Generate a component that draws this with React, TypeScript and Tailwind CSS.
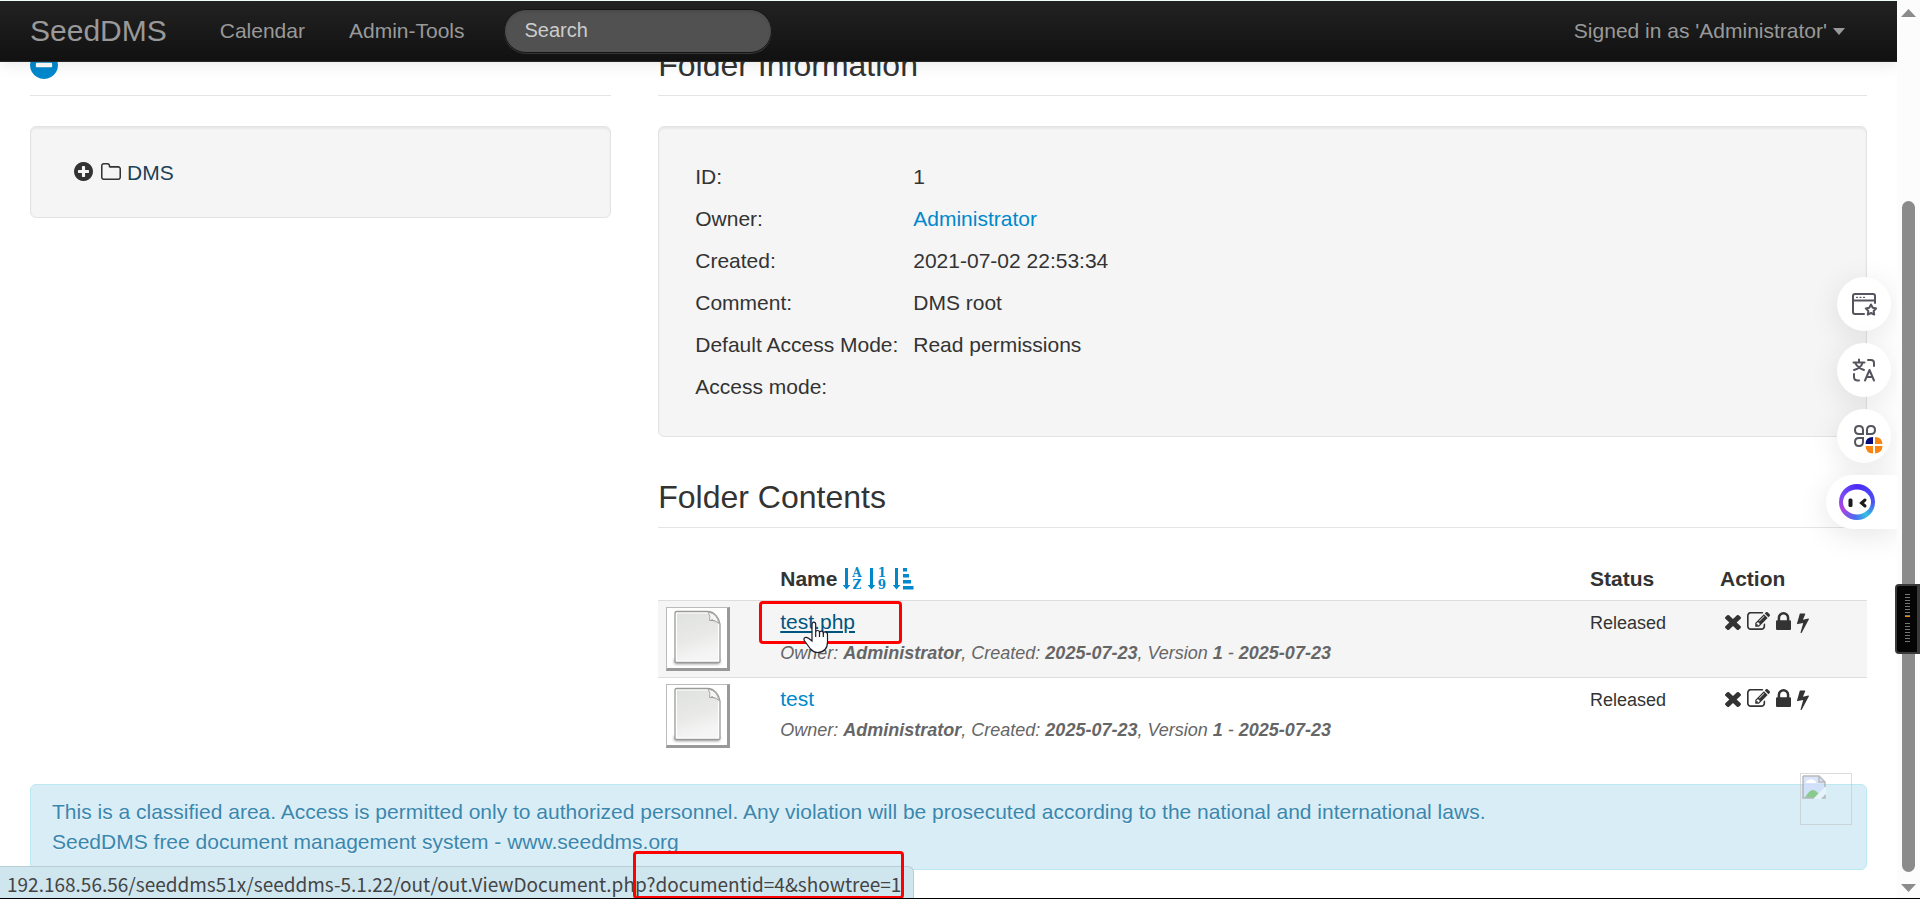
import type { ReactNode } from "react";

const info = [
  { label: "ID:", value: "1" },
  { label: "Owner:", value: "Administrator", link: true },
  { label: "Created:", value: "2021-07-02 22:53:34" },
  { label: "Comment:", value: "DMS root" },
  { label: "Default Access Mode:", value: "Read permissions" },
  { label: "Access mode:", value: "" },
];

const documents = [
  { name: "test.php", owner: "Administrator", date: "2025-07-23", version: "1", hovered: true },
  { name: "test", owner: "Administrator", date: "2025-07-23", version: "1", hovered: false },
];

function Glyph({ d, box, className }: { d: string; box: string; className: string }) {
  return (
    <svg viewBox={box} preserveAspectRatio="none" fill="currentColor" className={className} aria-hidden="true">
      <path d={d} />
    </svg>
  );
}

const CIRCLE =
  "m320-64q0 209-103 385.5t-279.5 279.5-385.5 103-385.5-103-279.5-279.5-103-385.5 103-385.5 279.5-279.5 385.5-103 385.5 103 279.5 279.5 103 385.5z";
const PLUS_CIRCLE =
  "M1344 960v-128q0-26-19-45t-45-19h-256v-256q0-26-19-45t-45-19h-128q-26 0-45 19t-19 45v256h-256q-26 0-45 19t-19 45v128q0 26 19 45t45 19h256v256q0 26 19 45t45 19h128q26 0 45-19t19-45v-256h256q26 0 45-19t19-45z" +
  CIRCLE;
const MINUS_CIRCLE =
  "M1344 960v-128q0-26-19-45t-45-19h-768q-26 0-45 19t-19 45v128q0 26 19 45t45 19h768q26 0 45-19t19-45z" + CIRCLE;
const FOLDER =
  "M1600 1312v-704q0-40-28-68t-68-28h-704q-40 0-68-28t-28-68v-64q0-40-28-68t-68-28h-320q-40 0-68 28t-28 68v960q0 40 28 68t68 28h1216q40 0 68-28t28-68zm128-704v704q0 92-66 158t-158 66h-1216q-92 0-158-66t-66-158v-960q0-92 66-158t158-66h320q92 0 158 66t66 158v32h672q92 0 158 66t66 158z";
const REMOVE =
  "M1490 1322q0 40-28 68l-136 136q-28 28-68 28t-68-28l-294-294-294 294q-28 28-68 28t-68-28l-136-136q-28-28-28-68t28-68l294-294-294-294q-28-28-28-68t28-68l136-136q28-28 68-28t68 28l294 294 294-294q28-28 68-28t68 28l136 136q28 28 28 68t-28 68l-294 294 294 294q28 28 28 68z";
const EDIT =
  "M888 1184l116-116-152-152-116 116v56h96v96h56zm440-720q-16-16-33 1l-350 350q-17 17-1 33t33-1l350-350q17-17 1-33zm80 594v190q0 119-84.5 203.5t-203.5 84.5h-832q-119 0-203.5-84.5t-84.5-203.5v-832q0-119 84.5-203.5t203.5-84.5h832q63 0 117 25 15 7 18 23 3 17-9 29l-49 49q-14 14-32 8-23-6-45-6h-832q-66 0-113 47t-47 113v832q0 66 47 113t113 47h832q66 0 113-47t47-113v-126q0-13 9-22l64-64q15-15 35-7t20 29zm-96-738l288 288-672 672h-288v-288zm444 132l-92 92-288-288 92-92q28-28 68-28t68 28l152 152q28 28 28 68t-28 68z";
const LOCK =
  "M640 768h512v-192q0-106-75-181t-181-75-181 75-75 181v192zm832 96v576q0 40-28 68t-68 28h-960q-40 0-68-28t-28-68v-576q0-40 28-68t68-28h32v-192q0-184 132-316t316-132 316 132 132 316v192h32q40 0 68 28t28 68z";
const BOLT =
  "M1333 566q18 20 7 44l-540 1157q-13 25-42 25-4 0-14-2-17-5-25.5-19t-4.5-30l197-808-406 101q-4 1-12 1-18 0-31-11-18-15-13-39l201-825q4-14 16-23t28-9h328q19 0 32 12.5t13 29.5q0 8-5 18l-171 463 396-98q8-2 12-2 19 0 34 15z";

function SortIcon({ kind }: { kind: "alpha" | "numeric" | "amount" }) {
  return (
    <svg viewBox="0 -4 21 30" className="h-[30px] w-[21px] overflow-visible" fill="currentColor" aria-hidden="true">
      <path d="M2 0h3v17h2.300L3.500 21.500 -.3 17H2z" />
      {kind === "amount" ? (
        <path d="M10 0h4v3.500h-4zM10 6h6v3.500h-6zM10 12h8v3.500h-8zM10 18h10.500v3.500H10z" />
      ) : (
        <g fontFamily="'DejaVu Serif', serif" fontSize="12">
          <text x="14" y="9" textAnchor="middle">{kind === "alpha" ? "A" : "1"}</text>
          <text x="14" y="21" textAnchor="middle">{kind === "alpha" ? "Z" : "9"}</text>
        </g>
      )}
    </svg>
  );
}

function DocumentIcon() {
  return (
    <div className="flex h-16 w-16 items-center justify-center border border-r-3 border-b-3 border-[#bbb] border-r-[#999] border-b-[#999] bg-white">
      <svg viewBox="0 0 60 60" className="h-[60px] w-[60px]" aria-hidden="true">
        <defs>
          <linearGradient id="paper" x1="0" y1="0" x2="0.3" y2="1">
            <stop offset="0" stopColor="#e0e2df" />
            <stop offset="0.600" stopColor="#e9eae8" />
            <stop offset="1" stopColor="#f5f5f5" />
          </linearGradient>
          <filter id="soft" x="-20%" y="-100%" width="140%" height="300%">
            <feGaussianBlur stdDeviation="1.500" />
          </filter>
        </defs>
        <rect x="7" y="51" width="46" height="5" rx="2" fill="#666" opacity="0.700" filter="url(#soft)" />
        <path d="M9.500 3.500h31q5 0 8.500 4t4 8.500V53q0 1.500-1.500 1.500h-42Q8 54.500 8 53V5q0-1.500 1.500-1.500z" fill="#fff" stroke="#999b97" strokeWidth="1.300" />
        <path d="M10 5.500h30q9 2 11 10.500V52.500H10z" fill="url(#paper)" />
        <path d="M41 4q3 4 1.500 8.500 6-1 9 3Q51 6 41 4z" fill="#f6f6f6" stroke="#a9aaa7" />
        <path d="M43 13q4-1 7.500 2.500L45 11z" fill="#9a9c98" />
      </svg>
    </div>
  );
}

function Pointer() {
  return (
    <svg viewBox="0 0 26 33" className="absolute top-3.5 left-[23px] h-[33px] w-[26px]" aria-hidden="true">
      <path
        d="M9 20V3.500q0-2.300 1.800-2.300t1.900 2.300V11q.3-1.500 1.900-1.500 1.700 0 1.900 1.800.4-1.200 1.900-1.200t1.900 1.800q.4-1 1.800-1 2.300 0 2.400 2.600V21q0 5-2.500 7.500-3 3-7.500 3-4 0-7-3.500L2 20.500q-1.800-2.300-.5-3.600 1.500-1.200 4 .4z"
        fill="#fff"
        stroke="#1b1b2b"
        strokeWidth="1.200"
      />
      <path d="M12.700 11v5M16.500 11v5M20.300 12v4" stroke="#1b1b2b" strokeWidth="1.200" />
    </svg>
  );
}

function Legend({ children }: { children: ReactNode }) {
  return (
    <h3 className="mb-[30px] flex h-[61px] items-center border-b border-[#e5e5e5] text-[32px] leading-[60px]">
      {children}
    </h3>
  );
}

function Navbar() {
  return (
    <nav className="absolute inset-x-0 top-0 z-10 flex h-[62px] items-center border-t border-b border-t-[#eefcfc] border-b-[#252525] bg-linear-to-b from-[#222] to-[#111] px-[30px] text-[21px] leading-[30px] text-[#999] shadow-[0_2px_15px_rgba(0,0,0,0.1)]">
      <a href="#" className="mr-[53px] text-[30px]">SeedDMS</a>
      <a href="#" className="mr-11">Calendar</a>
      <a href="#">Admin-Tools</a>
      <input
        type="search"
        aria-label="Search"
        placeholder="Search"
        className="ml-[39px] h-11 w-[268px] rounded-full border border-[#151515] bg-[#515151] px-5 pb-0.5 text-[20px] text-white shadow-[inset_0_2px_3px_rgba(0,0,0,0.1),0_1px_0_rgba(255,255,255,0.15)] placeholder:text-[#ccc]"
      />
      <button type="button" className="mr-[22px] ml-auto flex items-center gap-1.5">
        Signed in as 'Administrator'
        <svg viewBox="0 0 12 7" className="h-[7px] w-3" fill="currentColor" aria-hidden="true">
          <path d="M0 0h12L6 7z" />
        </svg>
      </button>
    </nav>
  );
}

function FolderInformation() {
  return (
    <section>
      <Legend>Folder Information</Legend>
      <div className="mb-[30px] rounded-md border border-[#e3e3e3] bg-[#f5f5f5] px-[30px] pt-[29px] pb-7 shadow-[inset_0_2px_2px_rgba(0,0,0,0.05)]">
        <table className="w-full">
          <tbody>
            {info.map((row) => (
              <tr key={row.label}>
                <th scope="row" className="w-[218px] p-1.5 text-left font-normal whitespace-nowrap">{row.label}</th>
                <td className="p-1.5">
                  {row.link ? <a href="#" className="text-[#0088cc]">{row.value}</a> : row.value}
                </td>
              </tr>
            ))}
          </tbody>
        </table>
      </div>
    </section>
  );
}

function FolderContents() {
  return (
    <section>
      <Legend>Folder Contents</Legend>
      <table className="w-full table-fixed">
        <thead>
          <tr className="text-left">
            <th className="w-[114px]" aria-label="Preview" />
            <th className="px-2 py-1.5">
              <div className="flex items-center">
                Name
                <span className="ml-1.5 flex gap-1 text-[#0088cc]">
                  <button type="button" aria-label="Sort by name"><SortIcon kind="alpha" /></button>
                  <button type="button" aria-label="Sort by sequence"><SortIcon kind="numeric" /></button>
                  <button type="button" aria-label="Sort by date"><SortIcon kind="amount" /></button>
                </span>
              </div>
            </th>
            <th className="w-[130px] px-2 py-1.5">Status</th>
            <th className="w-[155px] px-2 py-1.5">Action</th>
          </tr>
        </thead>
        <tbody>
          {documents.map((doc) => (
            <tr key={doc.name} className="border-t border-[#ddd] align-top odd:bg-[#f5f5f5]">
              <td className="px-2 py-1.5"><DocumentIcon /></td>
              <td className="px-2 py-1.5">
                <div className="relative">
                  <a
                    href="#"
                    className={doc.hovered ? "text-[#005580] underline decoration-2 underline-offset-2" : "text-[#0088cc]"}
                  >
                    {doc.name}
                  </a>
                  <p className="text-[18px] leading-8 text-[#666] italic">
                    Owner: <b>{doc.owner}</b>, Created: <b>{doc.date}</b>, Version <b>{doc.version}</b> - <b>{doc.date}</b>
                  </p>
                  {doc.hovered && (
                    <>
                      <div className="absolute -top-1.5 -left-[21px] h-[43px] w-[143px] rounded-sm border-3 border-[#fe0000]" />
                      <Pointer />
                    </>
                  )}
                </div>
              </td>
              <td className="px-2 py-1.5 text-[18px] leading-8">Released</td>
              <td className="px-2 py-1.5">
                <div className="flex gap-1.5 pt-[5px] pl-[5px]">
                  <button type="button" aria-label="Remove" className="flex h-[21px] items-center">
                    <Glyph d={REMOVE} box="302 366 1188 1188" className="h-[15px] w-4" />
                  </button>
                  <button type="button" aria-label="Edit" className="flex h-[21px]">
                    <Glyph d={EDIT} box="0 136 1784 1400" className="h-[18px] w-[23px]" />
                  </button>
                  <button type="button" aria-label="Lock" className="flex h-[21px]">
                    <Glyph d={LOCK} box="320 128 1152 1408" className="h-[18px] w-[15px]" />
                  </button>
                  <button type="button" aria-label="Expire" className="flex h-[21px]">
                    <Glyph d={BOLT} box="448 0 897 1792" className="h-[21px] w-3" />
                  </button>
                </div>
              </td>
            </tr>
          ))}
        </tbody>
      </table>
    </section>
  );
}

function BrokenImage() {
  return (
    <div className="absolute -top-3 right-3.5 h-[52px] w-[52px] border border-[#c0c0c0]/70 p-px opacity-80">
      <svg viewBox="0 0 24 24" className="h-6 w-6" aria-hidden="true">
        <path d="M1 1h16l6 6v16H1z" fill="#cfdffa" />
        <path d="M4 8q0-3 3-3 2-2 4 0 3 0 3 3z" fill="#fff" />
        <path d="M3 23q8-16 16 0z" fill="#77c274" />
        <path d="M24 11L11 24h7l6-6z" fill="#eaf5fa" />
        <path d="M1 1h16l6 6v5M1 1v22h11M17 1v6h6M23 20v3h-3" fill="none" stroke="#a9a9a9" strokeWidth="1.500" />
      </svg>
    </div>
  );
}

function SideTools() {
  const round =
    "mr-1.5 flex h-[54px] w-[54px] items-center justify-center rounded-full bg-white shadow-[0_6px_30px_rgba(0,0,0,0.1)]";
  return (
    <div className="absolute top-[277px] right-0 z-20 flex flex-col items-end gap-3">
      <button type="button" aria-label="Bookmark page" className={round}>
        <svg viewBox="0 0 26 24" className="h-6 w-[26px]" fill="none" stroke="#55555f" strokeWidth="2" strokeLinejoin="round" strokeLinecap="round">
          <path d="M13 22H4q-2 0-2-2V4q0-2 2-2h18q2 0 2 2v7M2 8.500h22" />
          <path d="M5.500 5.300h1M9 5.300h1M12.500 5.300h1" strokeWidth="1.300" />
          <path d="M20 12.500l1.700 3.300 3.500.6-2.500 2.600.5 3.600-3.200-1.600-3.200 1.600.5-3.600-2.500-2.600 3.500-.6z" />
        </svg>
      </button>
      <button type="button" aria-label="Translate" className={round}>
        <svg viewBox="0 0 24 24" className="h-6 w-6" fill="none" stroke="#55555f" strokeWidth="2" strokeLinecap="round" strokeLinejoin="round">
          <path d="M1.500 4.500h11M7 1.500v3M10.500 5Q9 10 2 12M3.500 5.500Q6 10 12 12M16 2h3q3 0 3 3v3M2 16v3q0 3.500 4 3.500h1M13 22.500L17.500 12 22 22.500M14.500 19h6" />
        </svg>
      </button>
      <button type="button" aria-label="Apps" className={round}>
        <svg viewBox="0 0 30 30" className="mt-1.5 ml-[7px] h-[30px] w-[30px]" fill="none" stroke="#55555f" strokeWidth="2">
          <path d="M10 10H6Q2 10 2 6t4-4 4 4zM14 10V6q0-4 4-4t4 4-4 4zM10 14v4q0 4-4 4t-4-4 4-4z" />
          <g stroke="none">
            <path d="M20 20h-7.500q0-7 7.500-7z" fill="#050a78" />
            <path d="M22 20v-7q7 0 7.500 7zM20 22v7.500q-7 0-7.500-7.500zM22 22h7.500q0 7-7.500 7.500z" fill="#f98512" />
          </g>
        </svg>
      </button>
      <button
        type="button"
        aria-label="Assistant"
        className="flex h-[54px] w-[71px] items-center rounded-l-full bg-white pl-[13px] shadow-[0_6px_30px_rgba(0,0,0,0.1)]"
      >
        <span className="flex h-9 w-9 items-center justify-center rounded-full bg-[conic-gradient(#4a2cf5,#4b50f5_25%,#33c0e0_40%,#4a6cf0_52%,#b040e0_68%,#7a4cf5_82%,#4a2cf5)]">
          <svg viewBox="0 0 36 36" className="h-9 w-9">
            <ellipse cx="18" cy="18" rx="14" ry="12.500" fill="#fff" />
            <rect x="9.500" y="14.500" width="4" height="8.500" rx="1.500" fill="#1b1b1b" />
            <path d="M26 16l-3.500 3 3.500 3" fill="none" stroke="#1b1b1b" strokeWidth="3" strokeLinecap="round" />
          </svg>
        </span>
      </button>
    </div>
  );
}

function Scrollbar() {
  return (
    <div className="flex w-[23px] shrink-0 flex-col items-center bg-[#fcfcfc] pt-[9px] pb-1.5 pr-px pl-px">
      <svg viewBox="0 0 15 8" className="h-2 w-[15px]" fill="#8b8b8b" aria-hidden="true">
        <path d="M7.500 0L15 8H0z" />
      </svg>
      <div className="mt-[184px] mb-3 w-[13px] flex-1 rounded-full bg-[#8b8b8b]" />
      <svg viewBox="0 0 15 8" className="h-2 w-[15px]" fill="#8b8b8b" aria-hidden="true">
        <path d="M0 0h15L7.500 8z" />
      </svg>
    </div>
  );
}

function SideHandle() {
  return (
    <div className="absolute top-[584px] right-0 z-30 flex h-[70px] w-[25px] flex-col items-center justify-center gap-1.5 rounded-l-sm border-2 border-r-3 border-[#3a3a3a] bg-[#050505]">
      <div className="h-[23px] w-[5px] border-b border-[#f08a00] bg-[repeating-linear-gradient(#777_0_1px,transparent_1px_3px)]" />
      <div className="h-[21px] w-[5px] bg-[repeating-linear-gradient(#777_0_1px,transparent_1px_3px)]" />
    </div>
  );
}

export default function App() {
  return (
    <div className="relative flex h-screen overflow-hidden border-b border-black bg-white font-['Liberation_Sans',Arial,sans-serif] text-[21px] leading-[30px] text-[#333]">
      <div className="relative min-w-0 flex-1 overflow-hidden">
        <Navbar />
        <main className="px-[30px] pt-[35px]">
          <div className="mb-[30px] flex items-start justify-between">
            <aside className="w-[31.65%]">
              <Legend>
                <a href="#" aria-label="Hide folder tree" className="text-[#0088cc]">
                  <Glyph d={MINUS_CIRCLE} box="128 128 1536 1536" className="h-7 w-7" />
                </a>
              </Legend>
              <div className="flex h-[92px] items-center gap-2 rounded-md border border-[#e3e3e3] bg-[#f5f5f5] pt-0.5 pl-[43px] shadow-[inset_0_2px_2px_rgba(0,0,0,0.05)]">
                <button type="button" aria-label="Expand DMS" className="mb-1">
                  <Glyph d={PLUS_CIRCLE} box="128 128 1536 1536" className="h-[19px] w-[19px]" />
                </button>
                <a href="#" className="flex items-center gap-1.5 text-[#1c4257]">
                  <Glyph d={FOLDER} box="64 128 1664 1408" className="mb-1 h-[17px] w-5 text-[#333]" />
                  DMS
                </a>
              </div>
            </aside>
            <div className="w-[65.8%]">
              <FolderInformation />
              <FolderContents />
            </div>
          </div>
          <div className="relative rounded-md border border-[#bce8f1] bg-[#d9edf7] py-3 pr-[53px] pl-[21px] text-[#3a87ad] text-shadow-[0_1px_0_rgba(255,255,255,0.5)]">
            <p>
              This is a classified area. Access is permitted only to authorized personnel. Any violation will be
              prosecuted according to the national and international laws.
            </p>
            <p>SeedDMS free document management system - www.seeddms.org</p>
            <BrokenImage />
          </div>
        </main>
        <SideTools />
      </div>
      <Scrollbar />
      <SideHandle />

      {/* link target shown while hovering */}
      <div className="absolute -bottom-px left-0 z-20 h-[33px] rounded-tr-md border-t border-r border-[#b9cdd6] bg-[#cfe6ef] pr-3 pl-[7px] font-['Noto_Sans_CJK_SC',sans-serif] text-[19px] leading-[34px] whitespace-nowrap text-[#444]">
        192.168.56.56/seeddms51x/seeddms-5.1.22/out/out.ViewDocument.php?documentid=4&showtree=1
      </div>
      <div className="absolute -bottom-px left-[633px] z-20 h-12 w-[271px] rounded-sm border-3 border-[#fe0000]" />
    </div>
  );
}
